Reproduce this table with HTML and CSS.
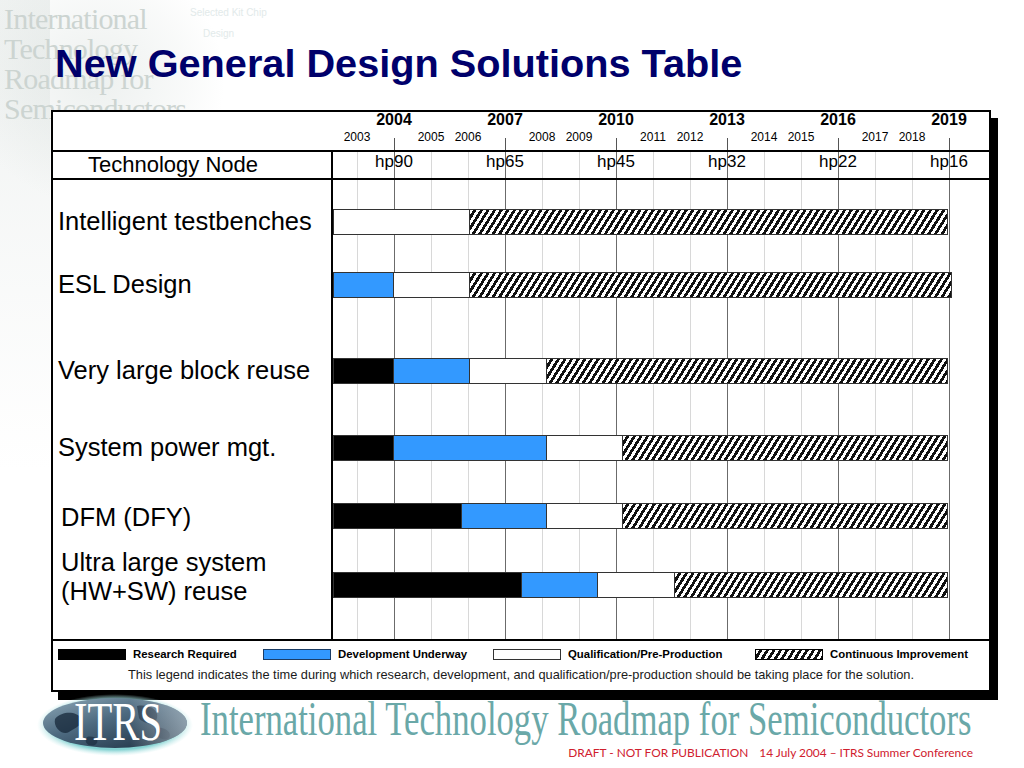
FILE: index.html
```html
<!DOCTYPE html>
<html>
<head>
<meta charset="utf-8">
<title>New General Design Solutions Table</title>
<link rel="stylesheet" href="styles.css">
</head>
<body>
<div class="slide">
  <div class="watermark" aria-hidden="true">
    <div class="wm-text">International<br>Technology<br>Roadmap for<br>Semiconductors</div>
    <div class="wm-small wm-s1">Selected Kit Chip</div>
    <div class="wm-small wm-s2">Design</div>
  </div>

  <h1 class="title">New General Design Solutions Table</h1>

  <div class="table">
    <div class="head">
      <div class="head-spacer"></div>
      <div class="scale">
        <div class="years big">
          <span class="yc"></span><span class="yc">2004</span><span class="yc"></span><span class="yc"></span><span class="yc">2007</span><span class="yc"></span><span class="yc"></span><span class="yc">2010</span><span class="yc"></span><span class="yc"></span><span class="yc">2013</span><span class="yc"></span><span class="yc"></span><span class="yc">2016</span><span class="yc"></span><span class="yc"></span><span class="yc">2019</span>
        </div>
        <div class="years small">
          <span class="yc">2003</span><span class="yc"></span><span class="yc">2005</span><span class="yc">2006</span><span class="yc"></span><span class="yc">2008</span><span class="yc">2009</span><span class="yc"></span><span class="yc">2011</span><span class="yc">2012</span><span class="yc"></span><span class="yc">2014</span><span class="yc">2015</span><span class="yc"></span><span class="yc">2017</span><span class="yc">2018</span><span class="yc"></span>
        </div>
      </div>
    </div>

    <div class="node-row">
      <div class="label-cell node-label">Technology Node</div>
      <div class="chart grid-bg">
        <div class="years nodes">
          <span class="yc"></span><span class="yc">hp90</span><span class="yc"></span><span class="yc"></span><span class="yc">hp65</span><span class="yc"></span><span class="yc"></span><span class="yc">hp45</span><span class="yc"></span><span class="yc"></span><span class="yc">hp32</span><span class="yc"></span><span class="yc"></span><span class="yc">hp22</span><span class="yc"></span><span class="yc"></span><span class="yc">hp16</span>
        </div>
      </div>
    </div>

    <div class="body">
      <div class="label-cell labels">
        <div class="lab l1">Intelligent testbenches</div>
        <div class="lab l2">ESL Design</div>
        <div class="lab l3">Very large block reuse</div>
        <div class="lab l4">System power mgt.</div>
        <div class="lab l5">DFM (DFY)</div>
        <div class="lab l6">Ultra large system<br>(HW+SW) reuse</div>
      </div>
      <div class="chart grid-bg bars">
        <div class="bar b1">
          <div class="seg qual" style="width:136px"></div>
          <div class="seg cont" style="width:479px"></div>
        </div>
        <div class="bar b2">
          <div class="seg dev" style="width:60px"></div>
          <div class="seg qual" style="width:76px"></div>
          <div class="seg cont" style="width:483px"></div>
        </div>
        <div class="bar b3">
          <div class="seg res" style="width:60px"></div>
          <div class="seg dev" style="width:76px"></div>
          <div class="seg qual" style="width:77px"></div>
          <div class="seg cont" style="width:402px"></div>
        </div>
        <div class="bar b4">
          <div class="seg res" style="width:60px"></div>
          <div class="seg dev" style="width:153px"></div>
          <div class="seg qual" style="width:76px"></div>
          <div class="seg cont" style="width:326px"></div>
        </div>
        <div class="bar b5">
          <div class="seg res" style="width:128px"></div>
          <div class="seg dev" style="width:85px"></div>
          <div class="seg qual" style="width:76px"></div>
          <div class="seg cont" style="width:326px"></div>
        </div>
        <div class="bar b6">
          <div class="seg res" style="width:188px"></div>
          <div class="seg dev" style="width:76px"></div>
          <div class="seg qual" style="width:77px"></div>
          <div class="seg cont" style="width:274px"></div>
        </div>
      </div>
    </div>

    <div class="legend">
      <div class="lg-row">
        <div class="lg-item"><span class="lg-box res"></span><span class="lg-text">Research Required</span></div>
        <div class="lg-item"><span class="lg-box dev"></span><span class="lg-text">Development Underway</span></div>
        <div class="lg-item"><span class="lg-box qual"></span><span class="lg-text">Qualification/Pre-Production</span></div>
        <div class="lg-item"><span class="lg-box cont"></span><span class="lg-text">Continuous Improvement</span></div>
      </div>
      <div class="lg-note">This legend indicates the time during which research, development, and qualification/pre-production should be taking place for the solution.</div>
    </div>
  </div>

  <footer class="footer">
    <svg class="logo" width="156" height="70" viewBox="0 -8 156 70" aria-label="ITRS">
      <defs>
        <radialGradient id="glow" cx="50%" cy="50%" r="50%">
          <stop offset="0.8" stop-color="#7fd0d0" stop-opacity="0.95"/>
          <stop offset="1" stop-color="#bfeaea" stop-opacity="0"/>
        </radialGradient>
        <linearGradient id="globe" x1="0" y1="0" x2="0.9" y2="1">
          <stop offset="0" stop-color="#8fa9b8"/>
          <stop offset="0.45" stop-color="#4d6a80"/>
          <stop offset="1" stop-color="#1d3042"/>
        </linearGradient>
        <linearGradient id="sheen" x1="0" y1="0" x2="1" y2="0">
          <stop offset="0.6" stop-color="#ffffff" stop-opacity="0"/>
          <stop offset="1" stop-color="#d8e6ee" stop-opacity="0.55"/>
        </linearGradient>
      </defs>
      <ellipse cx="78" cy="28" rx="78" ry="31" fill="url(#glow)"/>
      <ellipse cx="78" cy="26" rx="72" ry="25" fill="url(#globe)"/>
      <path d="M18 22 C26 13 40 15 44 21 C48 27 38 31 32 35 C26 39 16 31 18 22 Z" fill="#17283a" opacity="0.75"/>
      <path d="M100 9 C112 7 122 13 120 21 C118 29 106 27 102 21 Z" fill="#17283a" opacity="0.7"/>
      <path d="M118 31 C126 29 136 35 132 41 C126 45 116 39 118 31 Z" fill="#17283a" opacity="0.7"/>
      <path d="M50 40 C58 38 64 44 58 48 C52 50 46 46 50 40 Z" fill="#17283a" opacity="0.6"/>
      <ellipse cx="78" cy="26" rx="72" ry="25" fill="url(#sheen)"/>
      <text x="37" y="43" font-family="Liberation Serif, serif" font-size="54" fill="#ffffff" textLength="88" lengthAdjust="spacingAndGlyphs">ITRS</text>
    </svg>
    <div class="foot-text">
      <div class="foot-title"><span class="foot-title-inner">International Technology Roadmap for Semiconductors</span></div>
      <div class="foot-draft"><span>DRAFT - NOT FOR PUBLICATION</span><span class="foot-date">14 July 2004 – ITRS Summer Conference</span></div>
    </div>
  </footer>
</div>
</body>
</html>
```

FILE: styles.css
```css
* { box-sizing: border-box; }

html, body {
  margin: 0;
  padding: 0;
  background: #fff;
}

body {
  font-family: "Liberation Sans", Arial, sans-serif;
  color: #000;
}

.slide {
  position: relative;
  z-index: 0;
  width: 1024px;
  height: 768px;
  overflow: hidden;
  background: #fff;
}

/* faint background artwork in the top-left corner */
.watermark {
  position: absolute;
  z-index: -1;
  left: 0;
  top: 0;
  width: 280px;
  height: 500px;
  background:
    radial-gradient(ellipse 130px 125px at 95px 80px, rgba(185, 198, 193, 0.26), rgba(210, 218, 214, 0.14) 70%, rgba(255, 255, 255, 0) 100%),
    linear-gradient(to bottom, rgba(220, 226, 224, 0.45), rgba(255, 255, 255, 0) 470px) 0 0 / 50px 470px no-repeat;
}

.wm-text {
  font-family: "Liberation Serif", serif;
  font-size: 30px;
  line-height: 30px;
  color: #ccd4d1;
  padding: 4px 0 0 4px;
  letter-spacing: -0.8px;
}

.wm-small {
  position: absolute;
  font-size: 10px;
  color: #e2eaea;
}
.wm-s1 { left: 190px; top: 7px; }
.wm-s2 { left: 203px; top: 28px; }

.title {
  margin: 40px 0 0 55px;
  height: 46px;
  font-size: 39.7px;
  line-height: 46px;
  font-weight: bold;
  color: #00006b;
  white-space: nowrap;
}

/* main table */
.table {
  margin: 24px 0 0 51px;
  width: 940px;
  height: 582px;
  border: 2px solid #000;
  box-shadow: 7px 8px 0 #000;
  background: #fff;
}

.head {
  display: flex;
  height: 40px;
  border-bottom: 2px solid #000;
}

.head-spacer { width: 280px; flex: none; }

.scale {
  width: 656px;
  flex: none;
  background: linear-gradient(to right, #555 0 1px, transparent 1px) 61px 100% / 111px 12px repeat-x;
}

.years {
  display: grid;
  grid-template-columns: repeat(17, 37px);
  padding-left: 5.5px;
}

.yc {
  display: flex;
  justify-content: center;
  white-space: nowrap;
}

.big {
  font-size: 16px;
  line-height: 16px;
  font-weight: bold;
}

.small {
  margin-top: 2px;
  font-size: 12px;
  line-height: 14px;
}

.nodes {
  font-size: 17px;
  line-height: 18px;
  padding-top: 1px;
}

.node-row {
  display: flex;
  height: 28px;
  border-bottom: 2px solid #000;
}

.label-cell {
  width: 280px;
  flex: none;
  border-right: 2px solid #000;
}

.node-label {
  font-size: 22px;
  line-height: 26px;
  padding-left: 35px;
}

.chart {
  width: 656px;
  flex: none;
}

.grid-bg {
  background:
    linear-gradient(to right, transparent 621px, #fff 621px) 0 0 / 100% 100% no-repeat,
    linear-gradient(to right, #6b6b6b 0 1px, transparent 1px) 61px 0 / 111px 100% repeat-x,
    linear-gradient(to right, #d8d8d8 0 1px, transparent 1px) 24px 0 / 37px 100% repeat-x;
}

.body {
  display: flex;
  height: 461px;
  border-bottom: 2px solid #000;
}

.labels {
  display: flex;
  flex-direction: column;
  padding-left: 5px;
  padding-top: 27px;
}

.lab {
  font-size: 25.5px;
  line-height: 29px;
  white-space: nowrap;
}
.l2 { margin-top: 34px; }
.l3 { margin-top: 57px; }
.l4 { margin-top: 48px; }
.l5 { margin-top: 41px; margin-left: 3px; }
.l6 { margin-top: 16px; margin-left: 3px; }

.bars {
  display: flex;
  flex-direction: column;
  padding-top: 29px;
}

.bar {
  display: flex;
  height: 26px;
}
.b2 { margin-top: 37px; }
.b3 { margin-top: 60px; }
.b4 { margin-top: 51px; }
.b5 { margin-top: 42px; }
.b6 { margin-top: 43px; }

.seg {
  height: 26px;
  border: 1px solid #333;
  border-right: 0;
  flex: none;
}
.seg:last-child { border-right: 1px solid #333; }

.res { background: #000; }
.dev { background: #3399ff; }
.qual { background: #fff; }
.cont {
  background: repeating-linear-gradient(122deg, #fff 0 2.8px, #111 2.8px 5.6px);
}

/* legend */
.legend {
  height: 49px;
  padding: 8px 0 0 5px;
}

.lg-row {
  display: grid;
  grid-template-columns: 205px 230px 262px auto;
  height: 11px;
}

.lg-item {
  display: flex;
  align-items: center;
}

.lg-box {
  width: 68px;
  height: 11px;
  border: 1px solid #000;
  margin-right: 7px;
  flex: none;
}
.lg-box.dev { border-color: #1b3d66; }
.lg-box.qual { border-color: #333; }

.lg-text {
  font-size: 11.4px;
  line-height: 11px;
  font-weight: bold;
  white-space: nowrap;
}

.lg-note {
  margin-top: 8px;
  margin-left: -5px;
  font-size: 12.8px;
  line-height: 14px;
  text-align: center;
  color: #1a1a1a;
  white-space: nowrap;
}

/* footer band */
.footer {
  margin-top: 5px;
  height: 71px;
  display: flex;
  padding-left: 37px;
}

.logo {
  flex: none;
  margin-top: -8px;
}

.foot-text {
  margin-left: 7px;
  width: 775px;
  flex: none;
}

.foot-title {
  height: 49px;
  white-space: nowrap;
}

.foot-title-inner {
  display: inline-block;
  font-family: "Liberation Serif", serif;
  font-size: 49px;
  line-height: 44px;
  color: #6aa8a8;
  transform: scaleX(0.708);
  transform-origin: 0 0;
}

.foot-draft {
  display: flex;
  justify-content: flex-end;
  padding-right: 2px;
  font-family: Lato, "Open Sans", sans-serif;
  font-size: 11.9px;
  line-height: 14px;
  color: #d0202e;
  white-space: nowrap;
}

.foot-date { margin-left: 11px; }
```
